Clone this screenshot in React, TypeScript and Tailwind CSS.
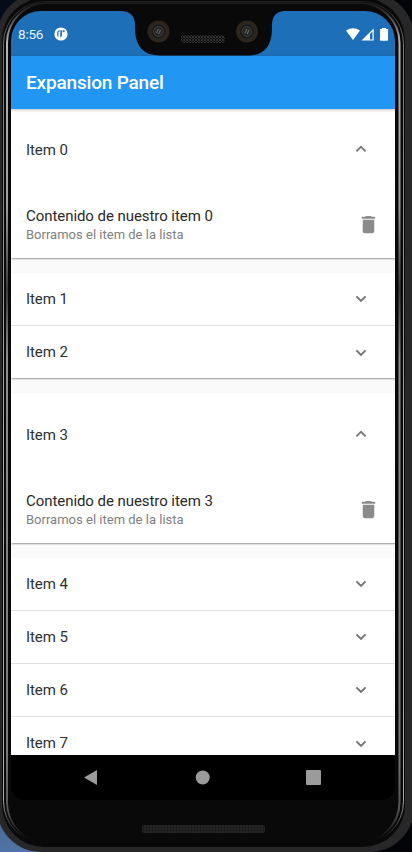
import React from "react";

function Chevron({ up = false }: { up?: boolean }) {
  return (
    <svg width="20" height="20" viewBox="0 0 24 24" className="mr-[24px] shrink-0" fill="#757575">
      <path d={up ? "M12 7.700l-6.300 6.300 1.600 1.600L12 10.900l4.700 4.700L18.300 14z" : "M16.700 8L12 12.700 7.300 8 5.700 9.600l6.300 6.300 6.300-6.300z"} />
    </svg>
  );
}

function Trash() {
  return (
    <svg width="23" height="23" viewBox="0 0 24 24" className="mr-[15px] shrink-0" fill="#8b8b8b">
      <path d="M6 19c0 1.1.9 2 2 2h8c1.1 0 2-.9 2-2V7H6v12zM19 4h-3.5l-1-1h-5l-1 1H5v2h14V4z" />
    </svg>
  );
}

function Row({ n, className = "" }: { n: number; className?: string }) {
  return (
    <div className={"flex h-[53px] items-center justify-between pl-[15px] text-[15px] text-[#303030] " + className}>
      <span className="tracking-[-0.06px]">Item {n}</span>
      <Chevron />
    </div>
  );
}

function OpenPanel({ n, className = "" }: { n: number; className?: string }) {
  return (
    <section className={"h-[150px] shrink-0 bg-white shadow-[0_1px_1.5px_0.5px_rgba(0,0,0,0.3)] " + className}>
      <div className="flex h-[82px] items-center justify-between pl-[15px] text-[15px] text-[#303030]">
        <span className="pt-[2px] tracking-[-0.06px]">Item {n}</span>
        <Chevron up />
      </div>
      <div className="flex h-[68px] items-center justify-between pl-[15px]">
        <div className="pt-[2px]">
          <div className="h-[20px] text-[15px] leading-[20px] tracking-[-0.06px] text-[#292929]">Contenido de nuestro item {n}</div>
          <div className="h-[18px] text-[13px] leading-[18px] tracking-[0.01px] text-[#808080]">Borramos el item de la lista</div>
        </div>
        <Trash />
      </div>
    </section>
  );
}

function Frame() {
  return (
    <svg className="absolute inset-0" width="412" height="852" viewBox="0 0 412 852">
      <defs>
        <linearGradient id="wall" x1="0" y1="0" x2="0" y2="1">
          <stop offset="0" stopColor="#050b18" />
          <stop offset="0.8" stopColor="#243a5c" />
          <stop offset="1" stopColor="#4f74a5" />
        </linearGradient>
        <linearGradient id="metal" gradientUnits="userSpaceOnUse" x1="0" y1="0" x2="0" y2="852">
          <stop offset="0" stopColor="#111" />
          <stop offset="0.015" stopColor="#333" />
          <stop offset="0.05" stopColor="#b5b5b5" />
          <stop offset="0.24" stopColor="#a19d9d" />
          <stop offset="0.34" stopColor="#3c3a3a" />
          <stop offset="0.42" stopColor="#918d8d" />
          <stop offset="0.88" stopColor="#77777c" />
          <stop offset="0.95" stopColor="#555" />
          <stop offset="0.985" stopColor="#090909" />
        </linearGradient>
        <linearGradient id="rim" gradientUnits="userSpaceOnUse" x1="0" y1="0" x2="0" y2="852">
          <stop offset="0" stopColor="#1b1b1b" />
          <stop offset="0.05" stopColor="#777" />
          <stop offset="0.5" stopColor="#aaa9a6" />
          <stop offset="0.94" stopColor="#aaa" />
          <stop offset="0.985" stopColor="#090909" />
        </linearGradient>
        <pattern id="mesh" width="3" height="3" patternUnits="userSpaceOnUse">
          <rect width="3" height="3" fill="#1b1b1b" />
          <circle cx="1" cy="1" r="0.8" fill="#343434" />
        </pattern>
      </defs>
      <rect width="206" height="852" fill="url(#wall)" />
      <rect x="206" width="206" height="852" fill="#030408" />
      <rect x="-3" y="-7" width="417" height="859" rx="44" fill="#272727" />
      <rect x="2" y="-2" width="403" height="849" rx="42" fill="#090909" />
      <rect x="3.5" y="1.500" width="400" height="842" rx="42" fill="none" stroke="url(#rim)" strokeWidth="1" />
      <rect x="7" y="3" width="392.500" height="839" rx="40" fill="none" stroke="url(#metal)" strokeWidth="2" />
      <rect x="8.500" y="4" width="389" height="838" rx="38" fill="#090909" />
      <rect x="142" y="825" width="123" height="8" rx="2" fill="url(#mesh)" />
    </svg>
  );
}

function Notch() {
  return (
    <svg className="absolute left-[122px] top-0" width="162" height="56" viewBox="122 0 162 56">
      <defs>
        <pattern id="grille" width="3" height="3" patternUnits="userSpaceOnUse">
          <circle cx="1" cy="1" r="0.9" fill="#444" />
          <circle cx="2.500" cy="2.500" r="0.8" fill="#303030" />
        </pattern>
      </defs>
      <path d="M122 10V11Q135 12 135 25V30Q136 55.500 160 55.500H248Q271 55.500 272 30V25Q272 12 284 11V10Z" fill="#090909" />
      {[158.5, 247].map((x) => (
        <g key={x}>
          <circle cx={x} cy="31.500" r="11" fill="#2c261f" />
          <circle cx={x} cy="31.500" r="7" fill="#191919" />
          <circle cx={x} cy="31.500" r="5" fill="#292725" stroke="#3d3d3d" />
          <path d={`M${x - 2} 33l2-4M${x} 34l2-4`} stroke="#777069" />
        </g>
      ))}
      <rect x="181" y="35" width="44" height="8" rx="3" fill="url(#grille)" />
    </svg>
  );
}

export default function App() {
  return (
    <div className="relative h-[852px] w-[412px] overflow-hidden bg-black font-['Roboto',sans-serif]">
      <Frame />
      <main className="relative ml-[11px] mt-[11px] flex h-[789px] w-[384px] flex-col overflow-hidden rounded-t-[30px] rounded-b-[14px] bg-black">
        <header className="flex h-[45px] shrink-0 items-center bg-[#1d70b7] pl-[7px] pr-[7px] text-white">
          <span className="w-[27px] pt-[2px] text-[13.5px] tracking-[-0.2px] text-[#e8f1f8]">8:56</span>
          <svg className="ml-[9px]" width="14" height="14" viewBox="0 0 14 14">
            <circle cx="7" cy="7" r="6.600" fill="white" />
            <path d="M5.800 3.200Q3.200 3.300 3.200 5.500V8.500Q3.400 9.800 4.400 10.300V5.500Q4.500 4.400 5.800 4.200Z" fill="#1d70b7" />
            <path d="M6.300 3.200H8V8.300Q7.800 10.300 6.300 10.500Z" fill="#1d70b7" />
            <rect x="8.800" y="3.200" width="1.800" height="2" fill="#1d70b7" />
          </svg>
          <svg className="ml-auto" width="43" height="14" viewBox="345 26 43 14" fill="white">
            <path d="M346 29.500Q353 25 360 29.500L353 39Z" />
            <path fillRule="evenodd" d="M361.500 39.500L373.700 27.500V39.500ZM370 33V38.500H372.500V30.500Z" />
            <path d="M380 28h2v-1h4v1h2v11q0 .700-.700.700h-6.600q-.700 0-.700-.700z" />
          </svg>
        </header>
        <div className="relative z-10 flex h-[53px] shrink-0 items-center bg-[#2196f3] pl-[15px] pt-[2px] shadow-[0_1px_3px_rgba(0,0,0,0.25)]">
          <h1 className="text-[19px] font-medium tracking-[-0.18px] text-white">Expansion Panel</h1>
        </div>
        <div className="-mt-px flex h-[647px] shrink-0 flex-col gap-[15px] overflow-hidden bg-[#fafafa]">
          <OpenPanel n={0} />
          <section className="h-[105px] shrink-0 bg-white shadow-[0_1px_1.5px_0.5px_rgba(0,0,0,0.3)] [clip-path:inset(0_0_-5px_0)]">
            <Row n={1} className="border-b border-[#e0e0e0]" />
            <Row n={2} />
          </section>
          <OpenPanel n={3} className="[clip-path:inset(0_0_-5px_0)]" />
          <section className="shrink-0 bg-white">
            <Row n={4} className="border-b border-[#e0e0e0]" />
            <Row n={5} className="border-b border-[#e0e0e0]" />
            <Row n={6} className="border-b border-[#e0e0e0]" />
            <Row n={7} />
          </section>
        </div>
        <nav className="flex h-[45px] shrink-0 items-center bg-black">
          <svg width="384" height="45" viewBox="11 755 384 45" fill="#9b9b9b">
            <path d="M84 777.500L97 770V785Z" />
            <circle cx="202.700" cy="777.500" r="7" />
            <rect x="306" y="770" width="15" height="15" rx="1" />
          </svg>
        </nav>
      </main>
      <Notch />
    </div>
  );
}
